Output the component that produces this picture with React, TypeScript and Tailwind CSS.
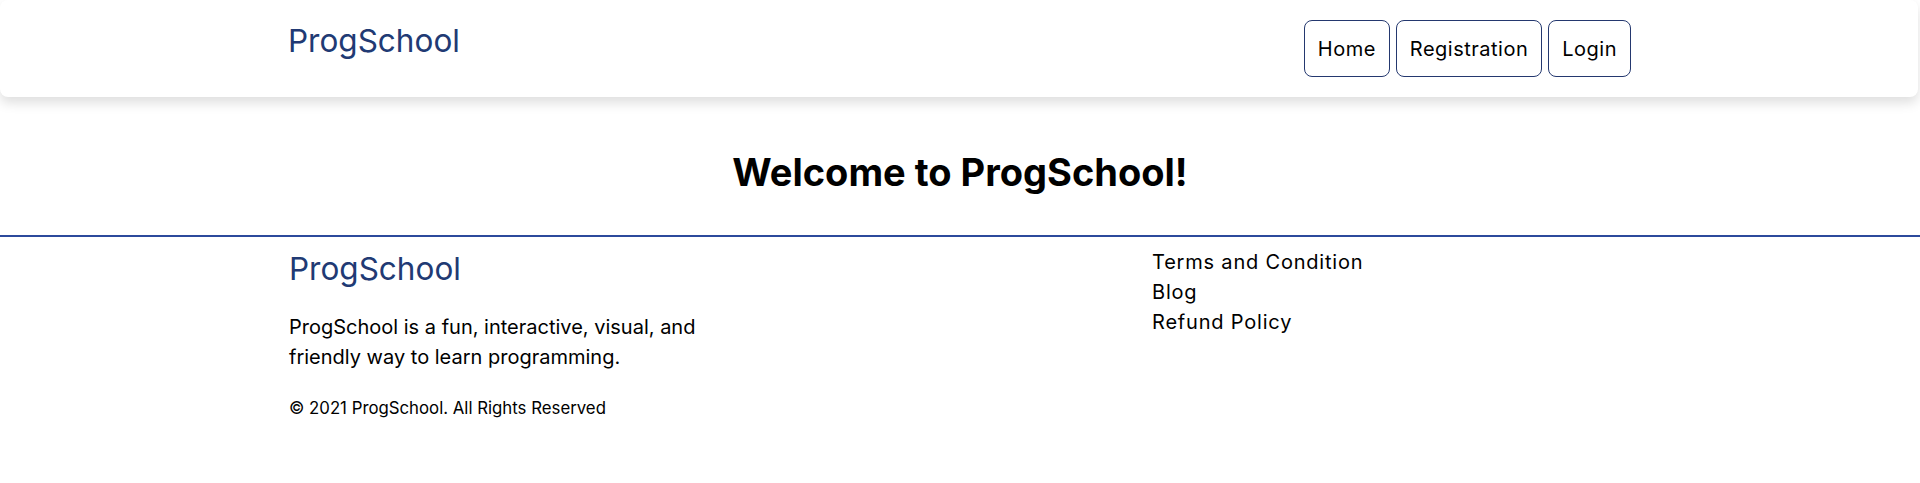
import { ReactElement } from "react";

const NAV = ["Home", "Registration", "Login"];
const LINKS = ["Terms and Condition", "Blog", "Refund Policy"];

export default function App(): ReactElement {
	return (
		<div className="w-full min-h-[483px] bg-white text-black font-['Inter','Noto_Sans',sans-serif]">
			<header className="mr-[2px] h-[97px] rounded-lg bg-white shadow-[0_6px_12px_rgba(0,0,0,0.13)]">
				<div className="w-[1344px] mx-auto flex items-start justify-between">
					<a className="ml-[1px] mt-[23px] text-[31.5px] leading-[36px] text-[#213a74]">ProgSchool</a>
					<nav className="mt-[20px] flex gap-[6px]">
						{NAV.map((item) => (
							<button
								key={item}
								className="h-[57px] px-[13px] rounded-lg border border-[#24386f] text-[20px] tracking-[0.5px] text-black"
							>
								{item}
							</button>
						))}
					</nav>
				</div>
			</header>
			<main className="pt-[52px] pb-[40px]">
				<h1 className="text-center text-[38px] leading-[46px] font-bold">Welcome to ProgSchool!</h1>
			</main>
			<footer className="border-t-2 border-[#2c4a9c]">
				<div className="w-[1342px] mx-auto flex pt-[10px]">
					<div className="w-[863px] pt-[4px]">
						<h2 className="text-[31.5px] leading-[36px] text-[#213a74]">ProgSchool</h2>
						<p className="mt-[25px] w-[440px] text-[20px] leading-[30px]">
							ProgSchool is a fun, interactive, visual, and friendly way to learn programming.
						</p>
						<p className="mt-[26px] text-[16.8px] leading-[20px]">© 2021 ProgSchool. All Rights Reserved</p>
					</div>
					<ul className="text-[20px] leading-[30px] tracking-[0.8px]">
						{LINKS.map((link) => (
							<li key={link}>
								<a>{link}</a>
							</li>
						))}
					</ul>
				</div>
			</footer>
		</div>
	);
}
